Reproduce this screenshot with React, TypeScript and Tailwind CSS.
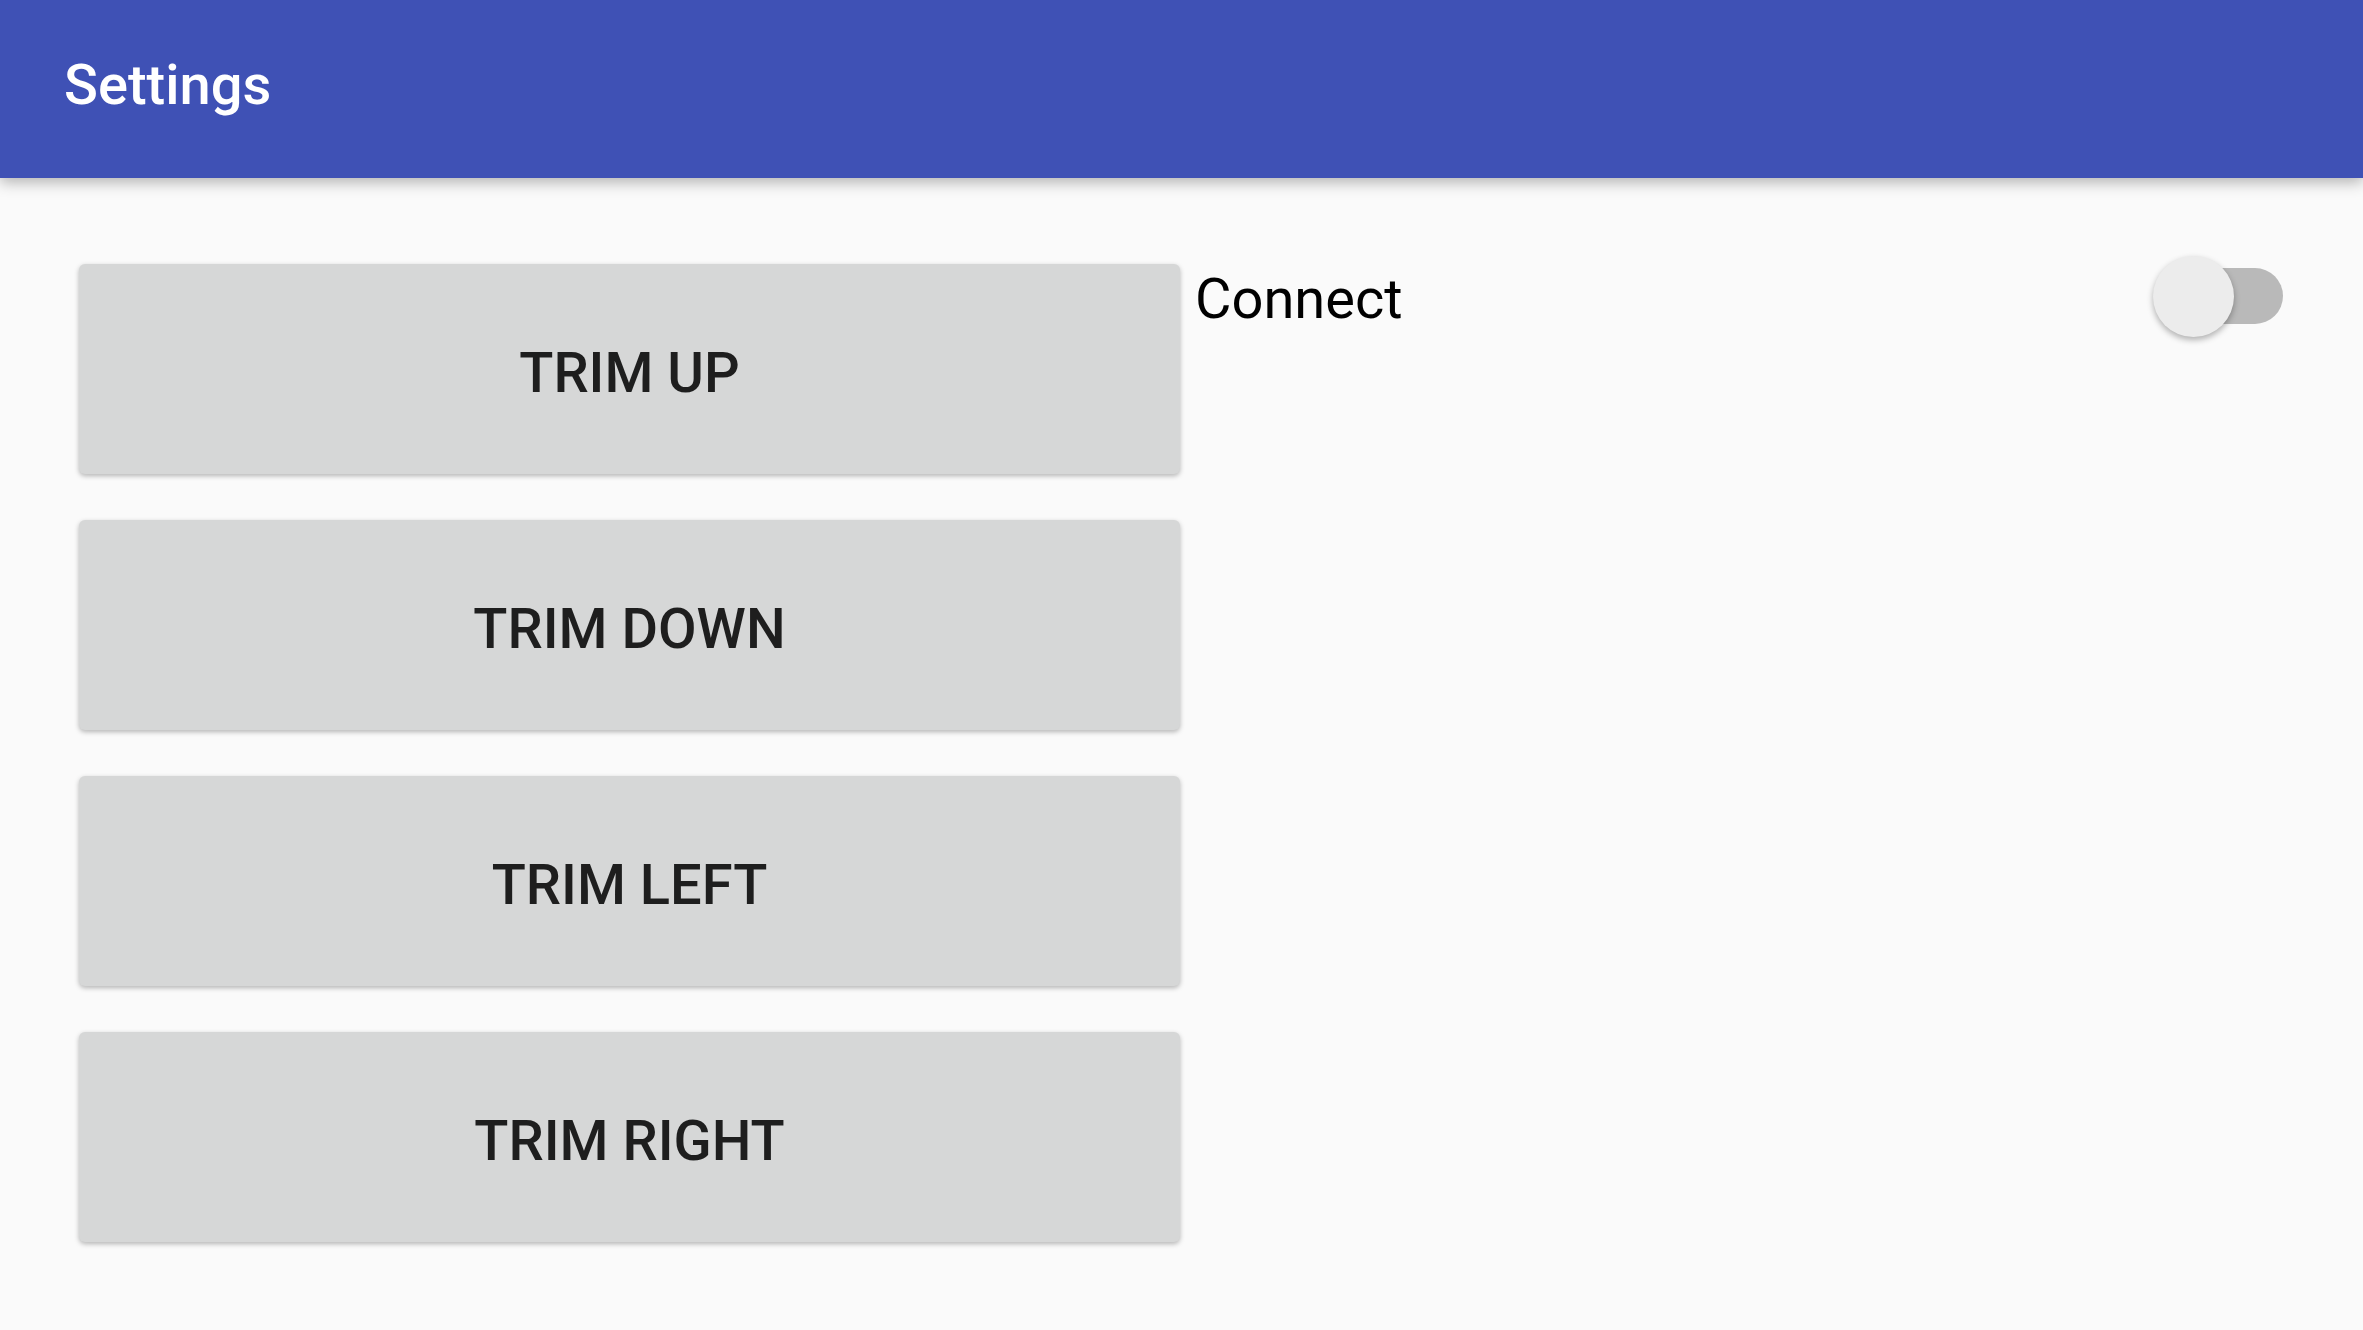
import React from "react";

const buttons = ["TRIM UP", "TRIM DOWN", "TRIM LEFT", "TRIM RIGHT"];

export default function App() {
  return (
    <div
      className="w-[2363px] h-[1330px] bg-[#fafafa] overflow-hidden flex flex-col"
      style={{ fontFamily: "Roboto, 'Noto Sans', sans-serif" }}
    >
      <header className="relative z-10 h-[178px] shrink-0 bg-[#3f51b5] shadow-[0_4px_14px_rgba(0,0,0,0.3)] pl-[64px] pt-[57px]">
        <h1 className="text-white text-[56px] leading-none font-medium">Settings</h1>
      </header>
      <main className="flex flex-1">
        <div className="w-[1181px] shrink-0 pl-[79px] pr-[1px] pt-[86px] flex flex-col gap-[46px]">
          {buttons.map((b) => (
            <button
              key={b}
              className="h-[210px] w-full rounded-[6px] bg-[#d6d7d7] shadow-[0_2px_5px_rgba(0,0,0,0.28)] flex items-center justify-center pt-[8px] text-[#1e1e1e] text-[56px] leading-none font-medium"
            >
              {b}
            </button>
          ))}
        </div>
        <div className="flex-1 flex items-start justify-between pl-[14px] pr-[80px] pt-[93px]">
          <span className="text-black text-[56px] leading-none">Connect</span>
          <div className="relative w-[122px] h-[56px] mt-[-3px] rounded-full bg-[#b9b9b9]">
            <div className="absolute left-[-8px] top-[-12px] w-[81px] h-[81px] rounded-full bg-[#ececec] shadow-[0_3px_6px_rgba(0,0,0,0.3)]" />
          </div>
        </div>
      </main>
    </div>
  );
}
